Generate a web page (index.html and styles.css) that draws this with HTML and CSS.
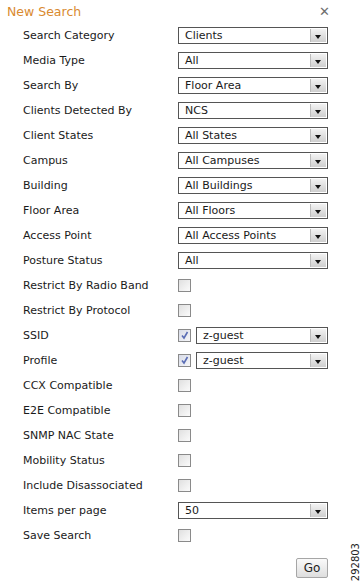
FILE: index.html
```html
<!DOCTYPE html>
<html>
<head>
<meta charset="utf-8">
<link rel="stylesheet" href="styles.css">
</head>
<body>
<div class="panel">
  <div class="header">
    <span class="title">New Search</span>
    <span class="close">&#x2715;</span>
  </div>
  <div class="form">
    <div class="label">Search Category</div><div class="ctl"><div class="sel"><span class="val">Clients</span><span class="arr"></span></div></div>
    <div class="label">Media Type</div><div class="ctl"><div class="sel"><span class="val">All</span><span class="arr"></span></div></div>
    <div class="label">Search By</div><div class="ctl"><div class="sel"><span class="val">Floor Area</span><span class="arr"></span></div></div>
    <div class="label">Clients Detected By</div><div class="ctl"><div class="sel"><span class="val">NCS</span><span class="arr"></span></div></div>
    <div class="label">Client States</div><div class="ctl"><div class="sel"><span class="val">All States</span><span class="arr"></span></div></div>
    <div class="label">Campus</div><div class="ctl"><div class="sel"><span class="val">All Campuses</span><span class="arr"></span></div></div>
    <div class="label">Building</div><div class="ctl"><div class="sel"><span class="val">All Buildings</span><span class="arr"></span></div></div>
    <div class="label">Floor Area</div><div class="ctl"><div class="sel"><span class="val">All Floors</span><span class="arr"></span></div></div>
    <div class="label">Access Point</div><div class="ctl"><div class="sel"><span class="val">All Access Points</span><span class="arr"></span></div></div>
    <div class="label">Posture Status</div><div class="ctl"><div class="sel"><span class="val">All</span><span class="arr"></span></div></div>
    <div class="label">Restrict By Radio Band</div><div class="ctl"><span class="cb"></span></div>
    <div class="label">Restrict By Protocol</div><div class="ctl"><span class="cb"></span></div>
    <div class="label">SSID</div><div class="ctl"><span class="cb checked"><svg viewBox="0 0 11 11" width="11" height="11"><path d="M3 5.5 L5 8 L8.5 2" fill="none" stroke="#5a6db5" stroke-width="1.6"/></svg></span><div class="sel narrow"><span class="val">z-guest</span><span class="arr"></span></div></div>
    <div class="label">Profile</div><div class="ctl"><span class="cb checked"><svg viewBox="0 0 11 11" width="11" height="11"><path d="M3 5.5 L5 8 L8.5 2" fill="none" stroke="#5a6db5" stroke-width="1.6"/></svg></span><div class="sel narrow"><span class="val">z-guest</span><span class="arr"></span></div></div>
    <div class="label">CCX Compatible</div><div class="ctl"><span class="cb"></span></div>
    <div class="label">E2E Compatible</div><div class="ctl"><span class="cb"></span></div>
    <div class="label">SNMP NAC State</div><div class="ctl"><span class="cb"></span></div>
    <div class="label">Mobility Status</div><div class="ctl"><span class="cb"></span></div>
    <div class="label">Include Disassociated</div><div class="ctl"><span class="cb"></span></div>
    <div class="label">Items per page</div><div class="ctl"><div class="sel"><span class="val">50</span><span class="arr"></span></div></div>
    <div class="label">Save Search</div><div class="ctl"><span class="cb"></span></div>
  </div>
  <div class="footer">
    <button class="go">Go</button>
  </div>
  <div class="fignum">292803</div>
</div>
</body>
</html>
```
FILE: styles.css
```css
html, body {
  margin: 0;
  padding: 0;
  background: #fff;
}
body {
  font-family: Tahoma, "DejaVu Sans", Verdana, sans-serif;
  font-size: 11px;
  color: #1a1a1a;
}
.panel {
  position: relative;
  width: 364px;
  height: 587px;
  overflow: hidden;
}
.header {
  display: flex;
  justify-content: space-between;
  align-items: center;
  height: 22px;
  padding: 0 34px 0 7px;
}
.title {
  color: #d98a2f;
  font-size: 12.5px;
}
.close {
  color: #6e6e6e;
  font-size: 13px;
  font-weight: bold;
}
.form {
  display: grid;
  grid-template-columns: 155px 150px;
  grid-auto-rows: 25px;
  padding-left: 23px;
  padding-top: 1px;
}
.label {
  display: flex;
  align-items: center;
  white-space: nowrap;
}
.ctl {
  display: flex;
  align-items: center;
  gap: 5px;
}
.sel {
  flex: 1;
  height: 17px;
  box-sizing: border-box;
  border: 1px solid #555;
  display: flex;
  align-items: stretch;
  background: #fff;
}
.sel .val {
  flex: 1;
  padding-left: 6px;
  line-height: 15px;
}
.sel .arr {
  width: 15px;
  margin: 1px;
  background: linear-gradient(#f2f2f2, #cfcfcf);
  border-left: 1px solid #bbb;
  position: relative;
}
.sel .arr::after {
  content: "";
  position: absolute;
  left: 4px;
  top: 6px;
  border-left: 3.5px solid transparent;
  border-right: 3.5px solid transparent;
  border-top: 4px solid #111;
}
.cb {
  width: 13px;
  height: 13px;
  box-sizing: border-box;
  border: 1px solid #8a8a8a;
  background: linear-gradient(135deg, #e0e0e0, #fbfbfb);
  display: inline-flex;
  align-items: center;
  justify-content: center;
  flex: none;
}
.cb.checked {
  background: linear-gradient(135deg, #d8dce8, #f6f6f8);
}
.footer {
  display: flex;
  justify-content: flex-end;
  padding: 10px 36px 0 0;
}
.go {
  font-family: inherit;
  font-size: 12px;
  width: 32px;
  height: 20px;
  padding: 0;
  border: 1px solid #a6a6a6;
  border-radius: 2px;
  background: linear-gradient(#fafafa, #dedede);
  color: #222;
}
.fignum {
  position: absolute;
  right: 3px;
  bottom: 6px;
  writing-mode: vertical-rl;
  transform: rotate(180deg);
  font-size: 10px;
  font-family: "DejaVu Sans", sans-serif;
  color: #222;
}
```
